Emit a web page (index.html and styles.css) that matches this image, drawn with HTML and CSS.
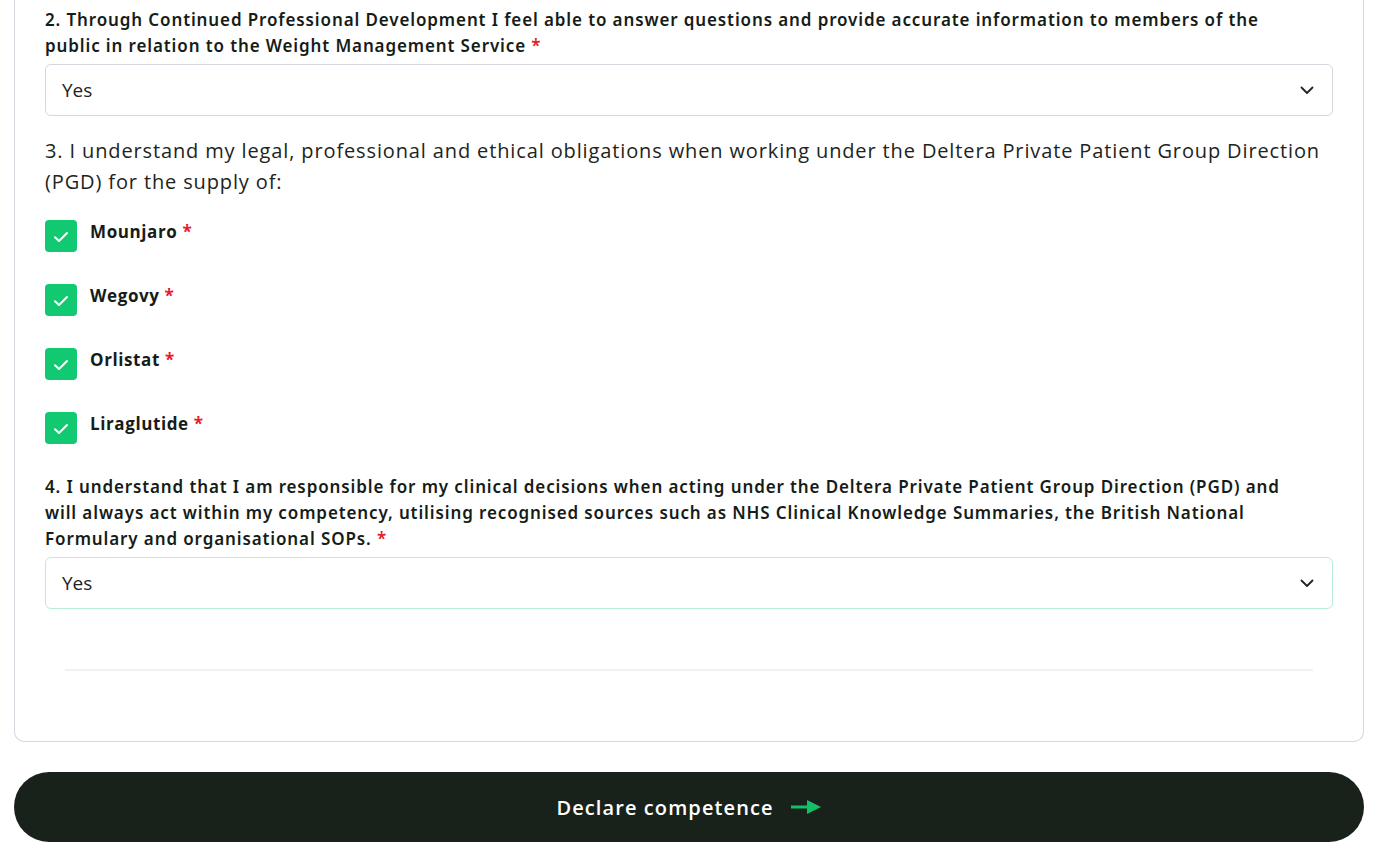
FILE: index.html
```html
<!DOCTYPE html>
<html lang="en">
<head>
<meta charset="utf-8">
<link rel="stylesheet" href="styles.css">
</head>
<body>
<div class="page">
  <div class="card">
    <div class="field">
      <label class="q-label">2. Through Continued Professional Development I feel able to answer questions and provide accurate information to members of the public in relation to the Weight Management Service <span class="req">*</span></label>
      <div class="select">
        <span>Yes</span>
        <svg class="chev" width="14" height="9" viewBox="0 0 14 9"><path d="M1.5 1.5 L7 7 L12.5 1.5" fill="none" stroke="#1f2328" stroke-width="1.8" stroke-linecap="round" stroke-linejoin="round"/></svg>
      </div>
    </div>
    <div class="field">
      <p class="q-plain">3. I understand my legal, professional and ethical obligations when working under the Deltera Private Patient Group Direction (PGD) for the supply of:</p>
      <div class="checks">
        <div class="check-row"><span class="box"><svg width="16" height="12" viewBox="0 0 16 12"><path d="M2 6.2 L6 10 L14 2" fill="none" stroke="#fff" stroke-width="2" stroke-linecap="round" stroke-linejoin="round"/></svg></span><span class="c-label">Mounjaro <span class="req">*</span></span></div>
        <div class="check-row"><span class="box"><svg width="16" height="12" viewBox="0 0 16 12"><path d="M2 6.2 L6 10 L14 2" fill="none" stroke="#fff" stroke-width="2" stroke-linecap="round" stroke-linejoin="round"/></svg></span><span class="c-label">Wegovy <span class="req">*</span></span></div>
        <div class="check-row"><span class="box"><svg width="16" height="12" viewBox="0 0 16 12"><path d="M2 6.2 L6 10 L14 2" fill="none" stroke="#fff" stroke-width="2" stroke-linecap="round" stroke-linejoin="round"/></svg></span><span class="c-label">Orlistat <span class="req">*</span></span></div>
        <div class="check-row"><span class="box"><svg width="16" height="12" viewBox="0 0 16 12"><path d="M2 6.2 L6 10 L14 2" fill="none" stroke="#fff" stroke-width="2" stroke-linecap="round" stroke-linejoin="round"/></svg></span><span class="c-label">Liraglutide <span class="req">*</span></span></div>
      </div>
    </div>
    <div class="field">
      <label class="q-label">4. I understand that I am responsible for my clinical decisions when acting under the Deltera Private Patient Group Direction (PGD) and will always act within my competency, utilising recognised sources such as NHS Clinical Knowledge Summaries, the British National Formulary and organisational SOPs. <span class="req">*</span></label>
      <div class="select focused">
        <span>Yes</span>
        <svg class="chev" width="14" height="9" viewBox="0 0 14 9"><path d="M1.5 1.5 L7 7 L12.5 1.5" fill="none" stroke="#1f2328" stroke-width="1.8" stroke-linecap="round" stroke-linejoin="round"/></svg>
      </div>
    </div>
    <div class="divider"></div>
  </div>
  <button class="submit">Declare competence <svg width="32" height="16" viewBox="0 0 32 16"><path d="M1 8 H18" stroke="#12c06a" stroke-width="3"/><path d="M17 1 L31 8 L17 15 Z" fill="#12c06a"/></svg></button>
</div>
</body>
</html>
```
FILE: styles.css
```css
* { box-sizing: border-box; }
html, body { margin: 0; padding: 0; background: #fff; }
body { font-family: "Open Sans", "Noto Sans", sans-serif; color: #161c18; }
.page { padding: 0 20px 26px 14px; }
.card {
  border: 1px solid #d4d7de;
  border-top: none;
  border-radius: 0 0 10px 10px;
  padding: 7px 30px 70px 30px;
}
.field { display: flex; flex-direction: column; }
.q-label {
  display: block;
  font-family: "Noto Sans", sans-serif;
  font-weight: 600;
  font-size: 17px;
  line-height: 26px;
  letter-spacing: 0.88px;
  color: #161c18;
  max-width: 1246px;
  margin-bottom: 5px;
}
.req { color: #e5202e; letter-spacing: 0; }
.select {
  height: 52px;
  border: 1px solid #d4d7de;
  border-radius: 6px;
  display: flex;
  align-items: center;
  justify-content: space-between;
  padding: 0 18px 0 16px;
  font-family: "Open Sans", sans-serif;
  font-size: 19px;
  color: #1f2328;
}
.select.focused { border-color: #b8efd4; }
.q-plain {
  margin: 19px 0 0;
  font-size: 20px;
  line-height: 31px;
  letter-spacing: 0.87px;
  color: #1d2420;
}
.checks { display: flex; flex-direction: column; gap: 32px; margin-top: 23px; margin-bottom: 30px; }
.check-row { display: flex; align-items: flex-start; gap: 13px; }
.box {
  width: 32px; height: 32px;
  background: #10c971;
  border-radius: 4px;
  display: flex; align-items: center; justify-content: center;
  flex: none;
}
.box svg { margin-top: 2px; }
.c-label { font-weight: 700; font-size: 17px; line-height: 24px; letter-spacing: 0.6px; color: #161c18; }
.divider { height: 2px; background: #f0f1f2; margin: 60px 20px 0; }
.submit {
  margin-top: 30px;
  width: 100%;
  height: 70px;
  border: none;
  border-radius: 35px;
  background: #18221a;
  color: #fff;
  font-family: "Open Sans", sans-serif;
  font-weight: 600;
  font-size: 20px;
  letter-spacing: 1.1px;
  display: flex; align-items: center; justify-content: center; gap: 16px;
  cursor: pointer;
}
```
